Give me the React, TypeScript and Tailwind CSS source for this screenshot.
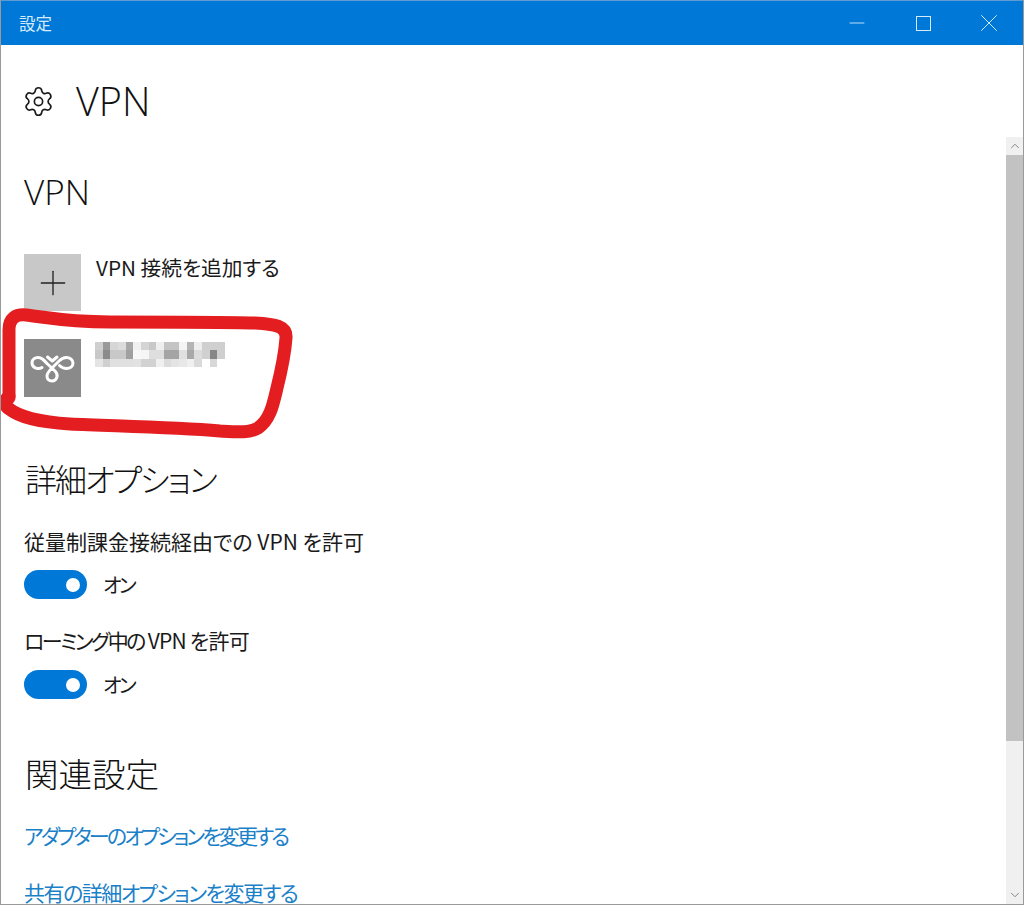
import { ChevronDown, ChevronUp, Minus, Plus, Settings, X } from "lucide-react";

const jp = "font-['Noto_Sans_CJK_JP','Open_Sans',sans-serif] [font-feature-settings:'palt']";

const mosaic = [
  ["#cfcfcf", "#9a9a9a", "#d6d6d6", "#dcdcdc", "#a8a8a8", "#f0f0f0", "#d4d4d4", "#c8c8c8", "#efefef", "#c4c4c4", "#c4c4c4", "#f4f4f4", "#b4b4b4", "#eeeeee", "#cfcfcf", "#cfcfcf", "#cfcfcf"],
  ["#c8c8c8", "#8a8a8a", "#c8c8c8", "#c8c8c8", "#a0a0a0", "#f8f8f8", "#f6f6f6", "#dedede", "#dedede", "#a4a4a4", "#a4a4a4", "#e0e0e0", "#a8a8a8", "#dcdcdc", "#d0d0d0", "#868686", "#cfcfcf"],
  ["#e4e4e4", "#d0d0d0", "#e0e0e0", "#e0e0e0", "#e0e0e0", "#e2e2e2", "#d2d2d2", "#d2d2d2", "#f0f0f0", "#dcdcdc", "#e4e4e4", "#e8e8e8", "#f0f0f0", "#dadada", "#ffffff", "#d8d8d8", "#ffffff"],
];

function Toggle({ label, className }: { label: string; className: string }) {
  return (
    <div className={`flex items-center gap-[16px] ${className}`}>
      <div className="w-[63px] h-[29px] rounded-full bg-[#0078d7] flex items-center justify-end pr-[7px]">
        <div className="w-[14px] h-[14px] rounded-full bg-white" />
      </div>
      <span className="text-[20px] leading-[29px] tracking-[-2.5px] text-[#1a1a1a]">{label}</span>
    </div>
  );
}

function VpnLogo() {
  return (
    <svg width="45" height="29" viewBox="0 0 45 29" fill="none" stroke="white" strokeWidth="3" strokeLinecap="round" strokeLinejoin="round">
      <path d="M12 13.5 C9 15.5 2 14.5 2 9 C2 5 5.5 3.5 8 3.5 C12 3.5 14 6 17 9.5 L25 17 C27 19 27.5 21 27 23 C26 26 24 27 22 27 C19 27 17 25 17 22 C17 19 20 16 22 14 L29 7 C31 5 33 3.5 36.5 3.5 C40 3.5 43 6 43 9 C43 12.5 40 14.5 36.5 14.5 C33 14.5 31 13 29.5 11.5" />
      <path d="M17.5 3 L22.3 7 L27 3" />
    </svg>
  );
}

export default function App() {
  return (
    <div className={`relative w-[1024px] h-[905px] overflow-hidden bg-white border border-[#9a9a9a] border-t-[#5f9bd0] flex flex-col ${jp}`}>
      {/* Title bar */}
      <div className="h-[44px] shrink-0 bg-[#0078d7] flex items-center justify-between text-[#d5eafa]">
        <span className="ml-[18px] text-[16.5px]">設定</span>
        <div className="flex items-center pr-[1px]">
          <div className="w-[66px] flex justify-center"><Minus size={24} strokeWidth={0.9} /></div>
          <div className="w-[66px] flex justify-center"><div className="w-[15px] h-[15px] border border-[#d5eafa]" /></div>
          <div className="w-[66px] flex justify-center"><X size={30} strokeWidth={0.8} /></div>
        </div>
      </div>

      {/* Page header */}
      <div className="h-[92px] shrink-0 flex items-center pl-[21px] gap-[21px] pt-[21px]">
        <Settings size={33} strokeWidth={1.2} className="text-[#1a1a1a]" />
        <h1 className="font-['Open_Sans',sans-serif] font-light text-[39.5px] leading-none text-[#111]">VPN</h1>
      </div>

      <div className="flex-1 min-h-0 flex">
        {/* Scrolling content */}
        <div className="flex-1 min-w-0 pl-[23px] overflow-hidden">
          <h2 className="font-['Open_Sans',sans-serif] font-light text-[35px] leading-[40px] mt-[35px] text-[#111]">VPN</h2>

          <div className="flex gap-[15px] mt-[42px]">
            <div className="w-[57px] h-[57px] bg-[#c8c8c8] flex items-center justify-center text-[#222]">
              <Plus size={40} strokeWidth={0.8} />
            </div>
            <span className="text-[20.7px] leading-[26px] text-[#1a1a1a]">VPN 接続を追加する</span>
          </div>

          <div className="flex gap-[14px] mt-[28px] h-[58px]">
            <div className="w-[57px] h-[58px] bg-[#8a8a8a] flex items-center justify-center">
              <VpnLogo />
            </div>
            <div className="mt-[3px] h-[25px] w-[130px] grid grid-cols-[repeat(17,1fr)] grid-rows-3">
              {mosaic.flat().map((c, i) => (
                <div key={i} style={{ backgroundColor: c }} />
              ))}
            </div>
          </div>

          <h2 className="text-[32px] font-light leading-[44px] tracking-[-2px] mt-[59px] ml-[1px] text-[#111]">詳細オプション</h2>

          <p className="text-[21px] leading-[28px] mt-[27px] text-[#1a1a1a]">従量制課金接続経由での VPN を許可</p>
          <Toggle label="オン" className="mt-[15px]" />

          <p className="text-[21px] leading-[28px] mt-[27px] text-[#1a1a1a] tracking-[-0.8px]">
            <span className="tracking-[-2.5px]">ローミング中の</span> VPN を許可
          </p>
          <Toggle label="オン" className="mt-[16px]" />

          <h2 className="text-[33.5px] font-light leading-[44px] mt-[52px] ml-[1px] text-[#111]">関連設定</h2>

          <a className="block text-[21px] leading-[28px] tracking-[-2.85px] mt-[26px] text-[#1a80c8]">アダプターのオプションを変更する</a>
          <a className="block text-[21px] leading-[28px] tracking-[-1.5px] mt-[29px] text-[#1a80c8]">共有の詳細オプションを変更する</a>
        </div>

        {/* Scrollbar */}
        <div className="w-[17px] shrink-0 bg-[#f0f0f0] flex flex-col text-[#777]">
          <div className="h-[18px] flex items-center justify-center"><ChevronUp size={14} strokeWidth={1.5} /></div>
          <div className="h-[586px] bg-[#c2c2c2]" />
          <div className="flex-1" />
          <div className="h-[18px] flex items-center justify-center"><ChevronDown size={14} strokeWidth={1.5} /></div>
        </div>
      </div>

      {/* Hand-drawn red annotation */}
      <svg className="absolute left-[-1px] top-[-1px] pointer-events-none" width="1024" height="905" fill="none" stroke="#e41e20" strokeWidth="13" strokeLinecap="round" strokeLinejoin="round">
        <path d="M9 398 L9 330 C9 318 16 314 26 315 C50 318 70 322 110 322 C170 322 220 322 255 323 C275 324 287 326 286 338 C285 352 281 372 277 388 C273 405 270 420 258 428 C250 433 238 432 220 431 C170 427 110 426 70 424 C40 422 20 418 8 408" />
        <path d="M9 396 L3 403 L8 408" />
      </svg>
    </div>
  );
}
